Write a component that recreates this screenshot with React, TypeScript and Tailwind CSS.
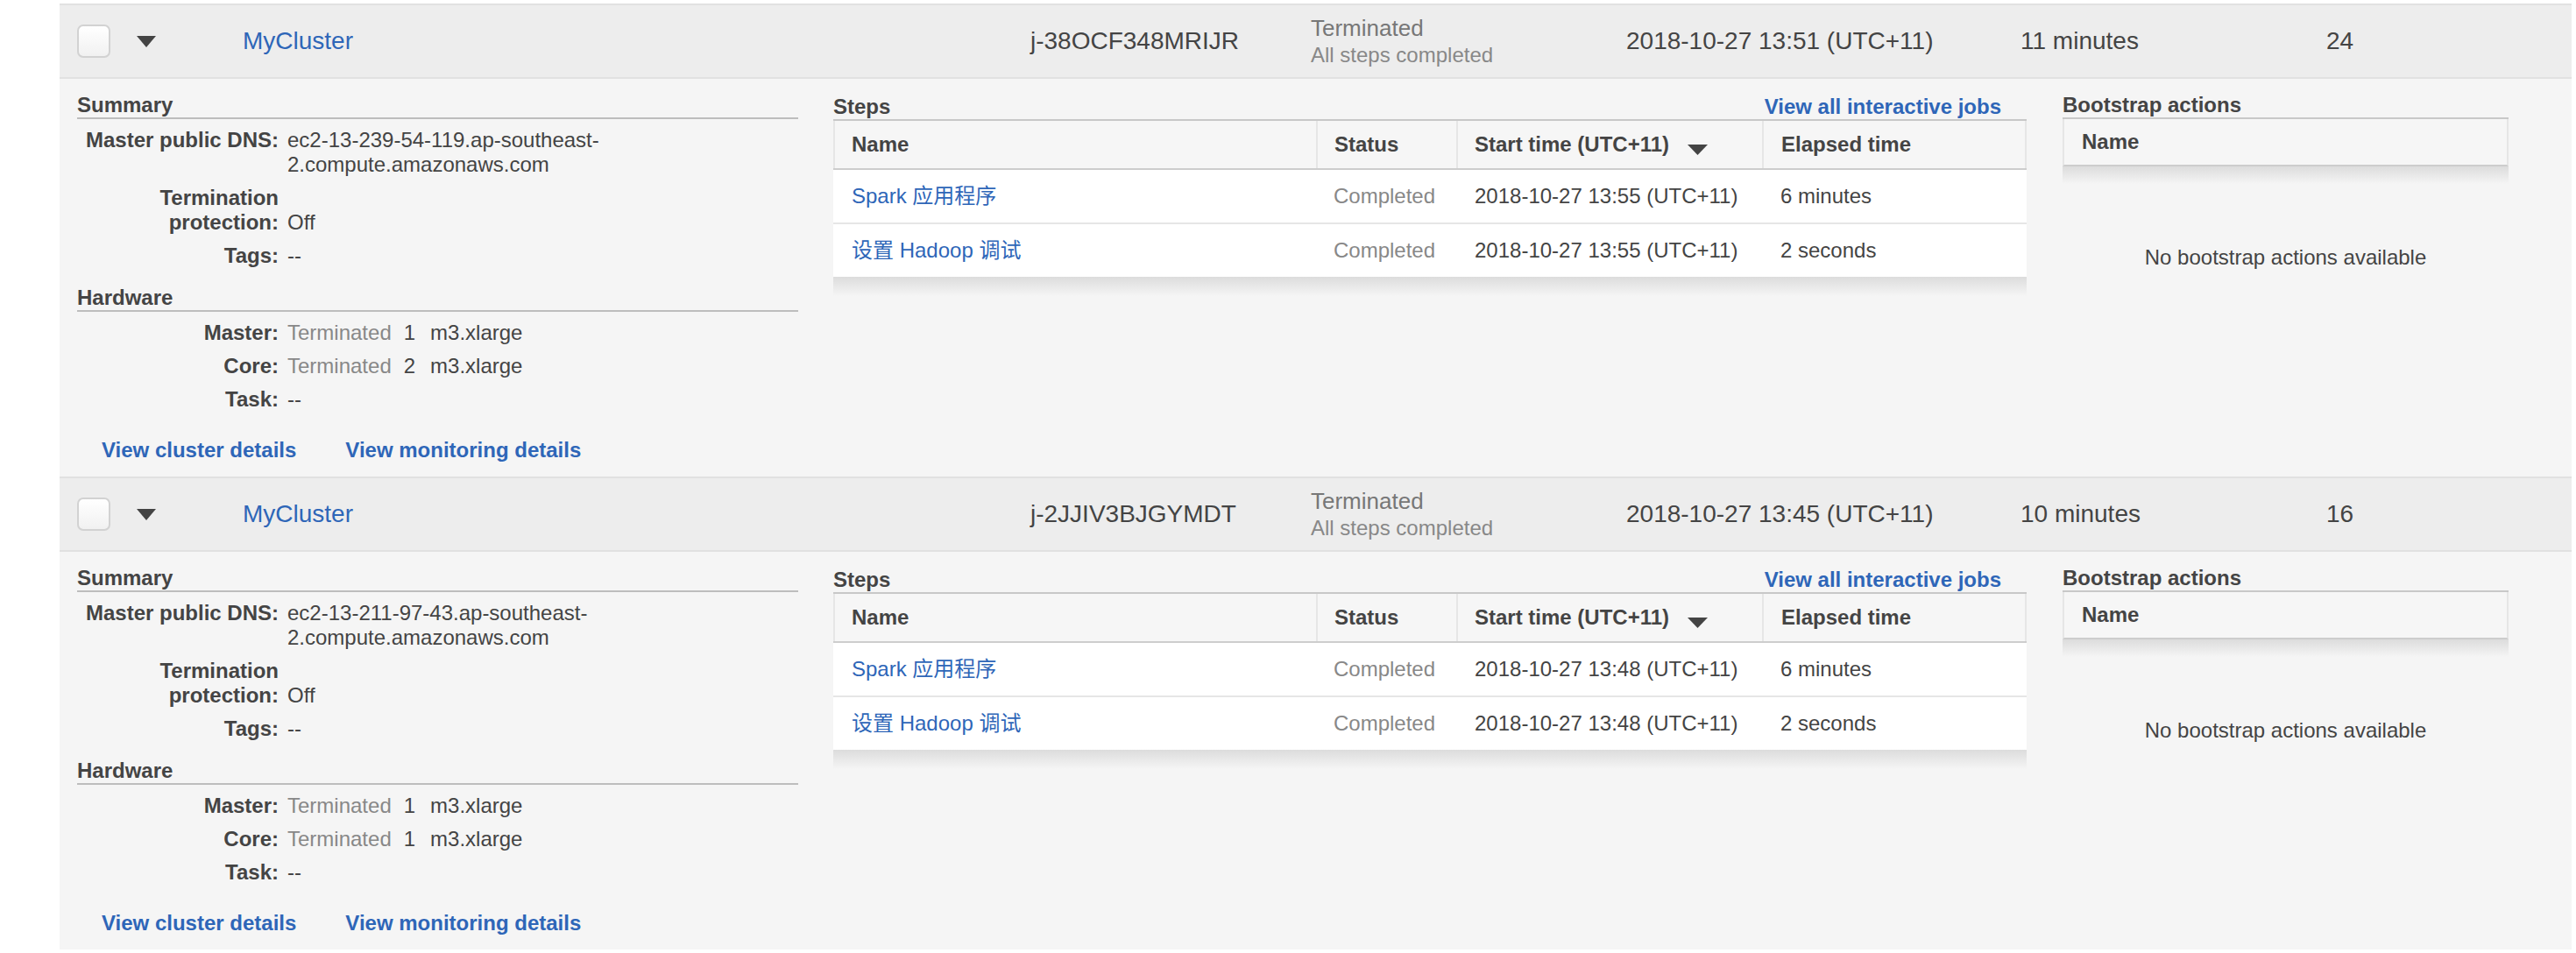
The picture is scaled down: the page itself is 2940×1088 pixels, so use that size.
import React from "react";

type Cluster = {
  id: string;
  date: string;
  elapsed: string;
  count: string;
  dns1: string;
  dns2: string;
  coreCount: string;
  stepStart: string;
};

const clusters: Cluster[] = [
  {
    id: "j-38OCF348MRIJR",
    date: "2018-10-27 13:51 (UTC+11)",
    elapsed: "11 minutes",
    count: "24",
    dns1: "ec2-13-239-54-119.ap-southeast-",
    dns2: "2.compute.amazonaws.com",
    coreCount: "2",
    stepStart: "2018-10-27 13:55 (UTC+11)",
  },
  {
    id: "j-2JJIV3BJGYMDT",
    date: "2018-10-27 13:45 (UTC+11)",
    elapsed: "10 minutes",
    count: "16",
    dns1: "ec2-13-211-97-43.ap-southeast-",
    dns2: "2.compute.amazonaws.com",
    coreCount: "1",
    stepStart: "2018-10-27 13:48 (UTC+11)",
  },
];

function Caret({ className }: { className?: string }) {
  return (
    <svg className={className} width="22" height="13" viewBox="0 0 22 13">
      <path d="M0 0H22L11 13Z" fill="#444" />
    </svg>
  );
}

function SortArrow() {
  return (
    <svg className="ml-[21px] mt-[12px] shrink-0" width="23" height="12" viewBox="0 0 23 12">
      <path d="M0 0H23L11.5 12Z" fill="#444" />
    </svg>
  );
}

function Field({
  label,
  children,
  end,
}: {
  label: React.ReactNode;
  children: React.ReactNode;
  end?: boolean;
}) {
  return (
    <div className={end ? "flex items-end" : "flex items-start"}>
      <div className="w-[230px] shrink-0 text-right font-bold text-[#444]">{label}</div>
      <div className="ml-[10px] flex-1 text-[#444]">{children}</div>
    </div>
  );
}

function ClusterBlock({ c }: { c: Cluster }) {
  return (
    <div className="bg-[#f5f5f5]">
      {/* header row */}
      <div className="flex h-[86px] items-center border-y-2 border-[#e1e1e1] bg-[#ededed] pl-[20px] text-[28px] text-[#444]">
        <div className="h-[38px] w-[38px] shrink-0 rounded-[7px] border-2 border-[#d2d2d2] bg-linear-to-b from-white to-[#f1f1f1]" />
        <Caret className="ml-[30px] shrink-0" />
        <div className="ml-[99px] w-[899px] shrink-0 text-[#2e66b8]">MyCluster</div>
        <div className="w-[320px] shrink-0">{c.id}</div>
        <div className="flex w-[360px] shrink-0 flex-col">
          <span className="text-[26px] leading-[30px] text-[#777]">Terminated</span>
          <span className="text-[24px] leading-[31px] text-[#888]">All steps completed</span>
        </div>
        <div className="w-[450px] shrink-0">{c.date}</div>
        <div className="w-[349px] shrink-0">{c.elapsed}</div>
        <div>{c.count}</div>
      </div>

      {/* detail */}
      <div className="flex pb-[16px] pl-[20px] pt-[16px] text-[24px] leading-[28px] text-[#444]">
        {/* Summary column */}
        <div className="flex w-[823px] shrink-0 flex-col">
          <div className="border-b-2 border-[#bdbdbd] font-bold">Summary</div>
          <div className="mt-[10px] flex flex-col gap-[10px]">
            <Field label="Master public DNS:">
              <div>{c.dns1}</div>
              <div>{c.dns2}</div>
            </Field>
            <Field
              end
              label={
                <>
                  <div>Termination</div>
                  <div>protection:</div>
                </>
              }
            >
              Off
            </Field>
            <Field label="Tags:">--</Field>
          </div>

          <div className="mt-[20px] border-b-2 border-[#bdbdbd] font-bold">Hardware</div>
          <div className="mt-[10px] flex flex-col gap-[10px]">
            <Field label="Master:">
              <span className="text-[#888]">Terminated</span>
              <span className="ml-[14px]">1</span>
              <span className="ml-[17px]">m3.xlarge</span>
            </Field>
            <Field label="Core:">
              <span className="text-[#888]">Terminated</span>
              <span className="ml-[14px]">{c.coreCount}</span>
              <span className="ml-[17px]">m3.xlarge</span>
            </Field>
            <Field label="Task:">--</Field>
          </div>

          <div className="mt-[30px] flex gap-[56px] pl-[28px] font-bold text-[#2e66b8]">
            <span>View cluster details</span>
            <span>View monitoring details</span>
          </div>
        </div>

        {/* Steps column */}
        <div className="ml-[40px] mt-[2px] flex w-[1362px] shrink-0 flex-col">
          <div className="flex items-end justify-between pr-[29px]">
            <span className="font-bold">Steps</span>
            <span className="font-bold text-[#2e66b8]">View all interactive jobs</span>
          </div>
          <div className="border-t-2 border-[#c8c8c8]">
            <div className="flex h-[56px] border-b-2 border-[#cdcdcd] bg-[#f6f6f6] font-bold">
              <div className="flex w-[551px] items-center border-l-2 border-[#e6e6e6] px-[19px]">Name</div>
              <div className="flex w-[160px] items-center border-l-2 border-[#e6e6e6] px-[19px]">Status</div>
              <div className="flex w-[349px] items-center border-l-2 border-[#e6e6e6] px-[19px]">
                <span>Start time (UTC+11)</span>
                <SortArrow />
              </div>
              <div className="flex w-[302px] items-center border-x-2 border-[#e6e6e6] px-[20px]">Elapsed time</div>
            </div>
            <div className="flex h-[62px] items-center border-b-2 border-[#e6e6e6] bg-white">
              <div className="w-[551px] px-[21px] text-[#2e66b8]">Spark 应用程序</div>
              <div className="w-[160px] px-[20px] text-[#888]">Completed</div>
              <div className="w-[349px] px-[21px]">{c.stepStart}</div>
              <div className="w-[302px] px-[21px]">6 minutes</div>
            </div>
            <div className="flex h-[60px] items-center bg-white">
              <div className="w-[551px] px-[21px] text-[#2e66b8]">设置 Hadoop 调试</div>
              <div className="w-[160px] px-[20px] text-[#888]">Completed</div>
              <div className="w-[349px] px-[21px]">{c.stepStart}</div>
              <div className="w-[302px] px-[21px]">2 seconds</div>
            </div>
            <div className="h-[22px] bg-linear-to-b from-[#dcdcdc] to-[#f5f5f5]" />
          </div>
        </div>

        {/* Bootstrap column */}
        <div className="ml-[41px] flex w-[509px] shrink-0 flex-col">
          <span className="font-bold">Bootstrap actions</span>
          <div className="border-t-2 border-[#c8c8c8]">
            <div className="flex h-[54px] items-center border-x-2 border-b-2 border-x-[#e6e6e6] border-b-[#cdcdcd] bg-[#f6f6f6] px-[20px] font-bold">
              Name
            </div>
            <div className="h-[20px] bg-linear-to-b from-[#dcdcdc] to-[#f5f5f5]" />
          </div>
          <div className="mt-[70px] text-center">No bootstrap actions available</div>
        </div>
      </div>
    </div>
  );
}

export default function App() {
  return (
    <div className="min-h-screen bg-white pl-[68px] pr-[5px] pt-[4px] font-['Liberation_Sans','Noto_Sans_CJK_SC',Arial,sans-serif]">
      {clusters.map((c) => (
        <ClusterBlock key={c.id} c={c} />
      ))}
    </div>
  );
}
